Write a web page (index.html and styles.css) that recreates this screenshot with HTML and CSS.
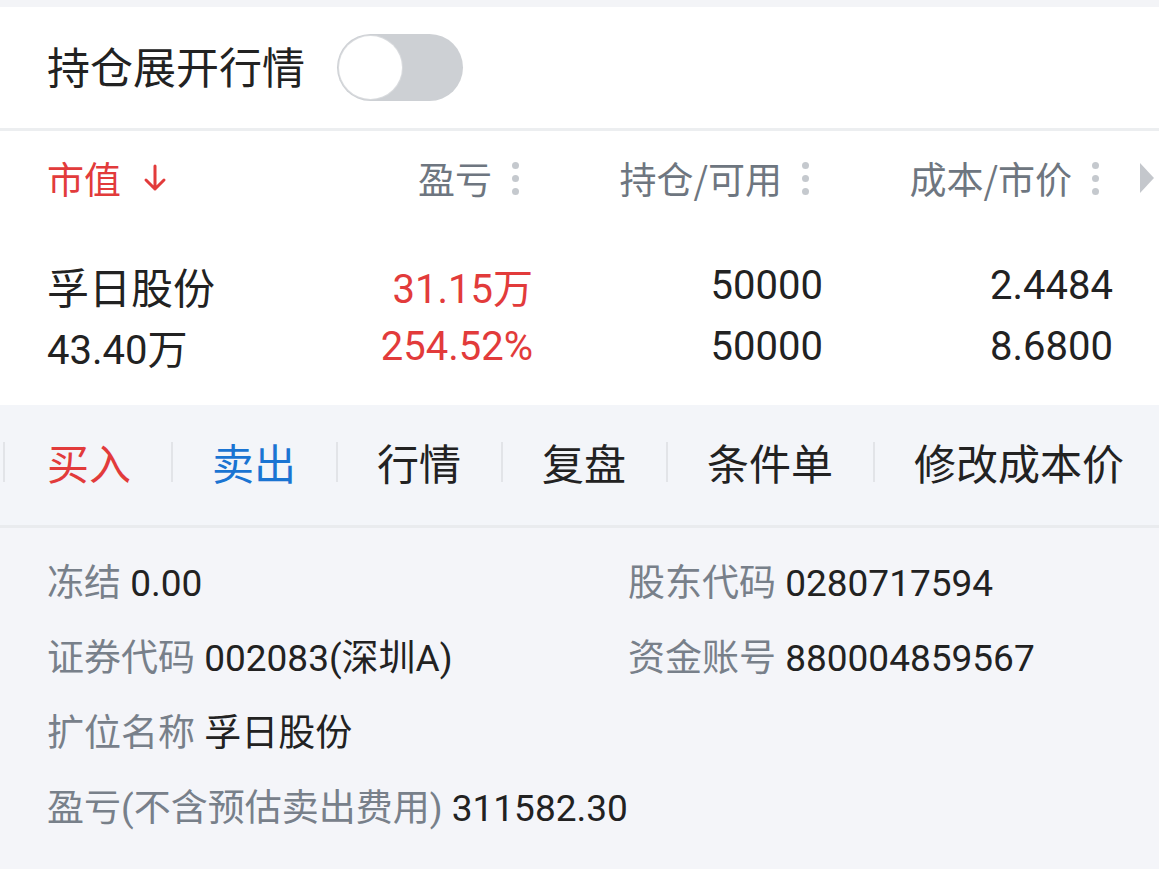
FILE: index.html
```html
<!doctype html>
<html>
<head>
  <meta charset="utf-8">
  <title>持仓</title>
  <link rel="stylesheet" href="styles.css">
</head>
<body>

<div class="top-gap"></div>

<section class="switch-bar">
  <span class="switch-title">持仓展开行情</span>
  <span class="toggle"><span class="knob"></span></span>
</section>

<section class="positions">
  <div class="pos-grid pos-head">
    <div class="head-cell sort">市值
      <svg class="arrow" width="24" height="30" viewBox="0 0 24 30">
        <path d="M12 3 V26 M3 17 L12 26 L21 17" fill="none" stroke="#e23b3b" stroke-width="3" stroke-linecap="round" stroke-linejoin="round"/>
      </svg>
    </div>
    <div class="head-cell">盈亏<span class="dots"><i></i><i></i><i></i></span></div>
    <div class="head-cell">持仓/可用<span class="dots"><i></i><i></i><i></i></span></div>
    <div class="head-cell">成本/市价<span class="dots"><i></i><i></i><i></i></span></div>
    <svg class="more" width="16" height="32" viewBox="0 0 16 32">
      <path d="M1 1 L15 16 L1 31 Z" fill="#c4c7cc"/>
    </svg>
  </div>

  <div class="pos-grid pos-body">
    <div class="cell name">孚日股份</div>
    <div class="cell num red">31.15万</div>
    <div class="cell num">50000</div>
    <div class="cell num">2.4484</div>
    <div class="cell num left">43.40万</div>
    <div class="cell num red">254.52%</div>
    <div class="cell num">50000</div>
    <div class="cell num">8.6800</div>
  </div>
</section>

<nav class="actions">
  <a class="action buy">买入</a>
  <a class="action sell">卖出</a>
  <a class="action">行情</a>
  <a class="action">复盘</a>
  <a class="action">条件单</a>
  <a class="action">修改成本价</a>
</nav>

<section class="details">
  <div class="detail"><span class="label">冻结</span> 0.00</div>
  <div class="detail"><span class="label">股东代码</span> 0280717594</div>
  <div class="detail"><span class="label">证券代码</span> 002083(深圳A)</div>
  <div class="detail"><span class="label">资金账号</span> 880004859567</div>
  <div class="detail wide"><span class="label">扩位名称</span> 孚日股份</div>
  <div class="detail wide"><span class="label">盈亏(不含预估卖出费用)</span> 311582.30</div>
</section>

</body>
</html>
```

FILE: styles.css
```css
body {
  margin: 0;
  background-color: #ffffff;
  font-family: "Roboto", "Noto Sans CJK SC", sans-serif;
  color: #222222;
}

.top-gap {
  height: 7px;
  background-color: #f3f4f7;
}

.switch-bar {
  display: flex;
  align-items: center;
  gap: 32px;
  height: 124px;
  padding-left: 47px;
  border-bottom: 3px solid #eceef0;
  box-sizing: border-box;
}

.switch-title {
  padding-bottom: 5px;
  font-family: "Noto Sans CJK SC", sans-serif;
  font-size: 43px;
  color: #222222;
}

.toggle {
  display: flex;
  align-items: center;
  width: 126px;
  height: 67px;
  border-radius: 34px;
  background-color: #cdd0d4;
  padding: 2px;
  box-sizing: border-box;
}

.knob {
  width: 63px;
  height: 63px;
  border-radius: 50%;
  background-color: #ffffff;
  box-shadow: 0 0 0 1px #d9dbde;
}

/* positions table */

.pos-grid {
  display: grid;
  grid-template-columns: 1fr 240px 290px 290px;
  padding: 0 46px 0 47px;
}

.pos-head {
  position: relative;
  height: 100px;
  padding-bottom: 6px;
  box-sizing: border-box;
  align-items: center;
}

.head-cell {
  display: flex;
  align-items: center;
  justify-content: flex-end;
  padding-right: 14px;
  font-family: "Noto Sans CJK SC", sans-serif;
  font-size: 37px;
  color: #6e7680;
}

.head-cell.sort {
  justify-content: flex-start;
  color: #e23b3b;
}

.arrow {
  margin-left: 22px;
}

.dots {
  display: flex;
  flex-direction: column;
  gap: 6px;
  margin-left: 20px;
}

.dots i {
  display: block;
  width: 7px;
  height: 7px;
  border-radius: 50%;
  background-color: #c5c9ce;
}

.more {
  position: absolute;
  right: 4px;
  top: 31px;
}

.pos-body {
  grid-auto-rows: 61px;
  align-items: center;
  padding-top: 24px;
  padding-bottom: 28px;
}

.cell {
  font-size: 40px;
  text-align: right;
}

.cell.name {
  text-align: left;
  font-family: "Noto Sans CJK SC", sans-serif;
  font-size: 42px;
}

.cell.left {
  text-align: left;
}

.red {
  color: #e23b3b;
}

/* action bar */

.actions {
  display: flex;
  align-items: center;
  height: 114px;
  padding: 0 0 6px 3px;
  overflow: hidden;
  background-color: #f3f5f9;
  border-bottom: 3px solid #e9ebee;
}

.action {
  flex-shrink: 0;
  white-space: nowrap;
  padding: 0 40px 0 39px;
  border-left: 2px solid #e2e4e8;
  line-height: 40px;
  font-family: "Noto Sans CJK SC", sans-serif;
  font-size: 42px;
  color: #222222;
}

.action.buy {
  padding-left: 42px;
  color: #e23b3b;
}

.action.sell {
  color: #1a74d2;
}

/* details */

.details {
  display: grid;
  grid-template-columns: 581px 1fr;
  grid-auto-rows: 75px;
  align-items: center;
  padding: 14px 0 27px 47px;
  background-color: #f4f5f9;
  font-size: 37px;
  color: #222222;
}

.detail.wide {
  grid-column: 1 / 3;
}

.label {
  color: #78808a;
}
```
